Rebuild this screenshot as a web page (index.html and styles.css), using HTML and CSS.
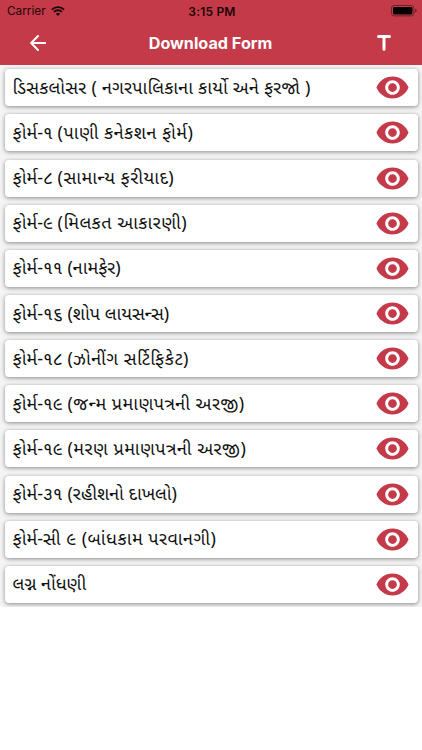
FILE: index.html
```
<!DOCTYPE html>
<html lang="gu">
<head>
    <meta charset="UTF-8">
    <meta name="viewport" content="width=device-width, initial-scale=1.0">
    <title>Download Form</title>
    <link rel="stylesheet" href="styles.css">
</head>
<body>
    <!-- Eye icon shared by all rows -->
    <svg class="hidden" xmlns="http://www.w3.org/2000/svg">
        <symbol id="eye" viewBox="0 0 24 24">
            <path d="M12 4.5C7 4.5 2.73 7.61 1 12c1.73 4.39 6 7.5 11 7.5s9.27-3.11 11-7.5c-1.73-4.39-6-7.5-11-7.5zM12 17c-2.76 0-5-2.24-5-5s2.24-5 5-5 5 2.24 5 5-2.24 5-5 5zm0-8c-1.66 0-3 1.34-3 3s1.34 3 3 3 3-1.34 3-3-1.34-3-3-3z"/>
        </symbol>
    </svg>

    <header class="header">
        <div class="status-bar">
            <div class="carrier">
                <span>Carrier</span>
                <svg class="wifi" viewBox="0 0 14 10">
                    <path d="M0.9 3.6a8.7 8.7 0 0 1 12.2 0M3 5.9a5.7 5.7 0 0 1 8 0" fill="none" stroke="#1c0508" stroke-width="1.9"/>
                    <path d="M7 10L4.8 7.7a3.2 3.2 0 0 1 4.4 0z" fill="#1c0508"/>
                </svg>
            </div>
            <span class="time">3:15 PM</span>
            <svg class="battery" viewBox="0 0 26 12">
                <rect x="0.5" y="0.5" width="22.4" height="10.4" rx="2.6" fill="none" stroke="#6e1f29"/>
                <rect x="2" y="2" width="19.4" height="7.4" rx="1.3" fill="#000"/>
                <path d="M24.2 3.8v3.8q1.4-.5 1.4-1.9t-1.4-1.9z" fill="#6e1f29"/>
            </svg>
        </div>
        <nav class="nav-bar">
            <svg class="back" viewBox="0 0 16 16">
                <path d="M15.2 8H1.4M8 1L1.2 8L8 15" fill="none" stroke="#fff" stroke-width="2" stroke-linecap="round" stroke-linejoin="round"/>
            </svg>
            <h1>Download Form</h1>
            <svg class="text-size" viewBox="0 0 14 16">
                <path d="M1.5 1.6H12.5M7 1.6V14.2" fill="none" stroke="#fff" stroke-width="3" stroke-linecap="round"/>
            </svg>
        </nav>
    </header>

    <main class="list">
        <div class="card"><span class="loose">ડિસકલોસર ( નગરપાલિકાના કાર્યો અને ફરજો )</span><svg class="eye"><use href="#eye"/></svg></div>
        <div class="card"><span>ફોર્મ-૧ <span class="wide">(પાણી કનેકશન ફોર્મ)</span></span><svg class="eye"><use href="#eye"/></svg></div>
        <div class="card"><span>ફોર્મ-૮ <span class="wide">(સામાન્ય ફરીયાદ)</span></span><svg class="eye"><use href="#eye"/></svg></div>
        <div class="card"><span>ફોર્મ-૯ <span class="wide">(મિલકત આકારણી)</span></span><svg class="eye"><use href="#eye"/></svg></div>
        <div class="card"><span>ફોર્મ-૧૧ (નામફેર)</span><svg class="eye"><use href="#eye"/></svg></div>
        <div class="card"><span>ફોર્મ-૧૬ (શોપ લાયસન્સ)</span><svg class="eye"><use href="#eye"/></svg></div>
        <div class="card"><span>ફોર્મ-૧૮ <span class="wide">(ઝોનીંગ સર્ટિફિકેટ)</span></span><svg class="eye"><use href="#eye"/></svg></div>
        <div class="card"><span>ફોર્મ-૧૯ <span class="wide">(જન્મ પ્રમાણપત્રની અરજી)</span></span><svg class="eye"><use href="#eye"/></svg></div>
        <div class="card"><span>ફોર્મ-૧૯ <span class="wide">(મરણ પ્રમાણપત્રની અરજી)</span></span><svg class="eye"><use href="#eye"/></svg></div>
        <div class="card"><span>ફોર્મ-૩૧ (રહીશનો દાખલો)</span><svg class="eye"><use href="#eye"/></svg></div>
        <div class="card"><span>ફોર્મ-<span class="wide">સી ૯ (બાંધકામ પરવાનગી)</span></span><svg class="eye"><use href="#eye"/></svg></div>
        <div class="card"><span>લગ્ન નોંધણી</span><svg class="eye"><use href="#eye"/></svg></div>
    </main>
</body>
</html>
```
FILE: styles.css
```
* {
    box-sizing: border-box;
}

body {
    margin: 0;
    background-color: #fff;
    font-family: 'Inter', sans-serif;
}

.hidden {
    display: none;
}

.header {
    height: 65px;
    background-color: #c53a49;
}

.status-bar {
    display: grid;
    grid-template-columns: 1fr auto 1fr;
    align-items: center;
    height: 22px;
    padding: 0 5px 0 7px;
    font-size: 11.8px;
    color: #1c0508;
}

.carrier {
    display: flex;
    align-items: center;
    gap: 5px;
}

.wifi {
    width: 14px;
    height: 10px;
}

.time {
    font-size: 12px;
    font-weight: 600;
    letter-spacing: 0.2px;
}

.battery {
    width: 26px;
    height: 12px;
    justify-self: end;
}

.nav-bar {
    display: grid;
    grid-template-columns: 1fr auto 1fr;
    align-items: center;
    height: 42px;
    padding: 0 31px 0 30px;
}

.nav-bar h1 {
    margin: 0;
    font-size: 16.2px;
    font-weight: 700;
    color: #fff;
}

.back {
    width: 16px;
    height: 16px;
}

.text-size {
    width: 14px;
    height: 16px;
    justify-self: end;
}

.list {
    display: flex;
    flex-direction: column;
    gap: 8.15px;
    padding: 4.3px 4px 4px 4.5px;
    background-color: #f4f4f4;
}

.card {
    display: flex;
    align-items: center;
    justify-content: space-between;
    height: 37px;
    padding: 0 8px;
    border-radius: 4px;
    background-color: #fff;
    box-shadow: 0 1px 4px rgba(0, 0, 0, 0.45);
    font-family: 'Noto Sans', 'Noto Sans Gujarati', sans-serif;
    font-size: 18px;
    white-space: nowrap;
    color: #111;
}

.loose {
    letter-spacing: 0.22px;
}

.wide {
    letter-spacing: 0.48px;
}

.eye {
    width: 35px;
    height: 35px;
    fill: #c53a49;
}
```
